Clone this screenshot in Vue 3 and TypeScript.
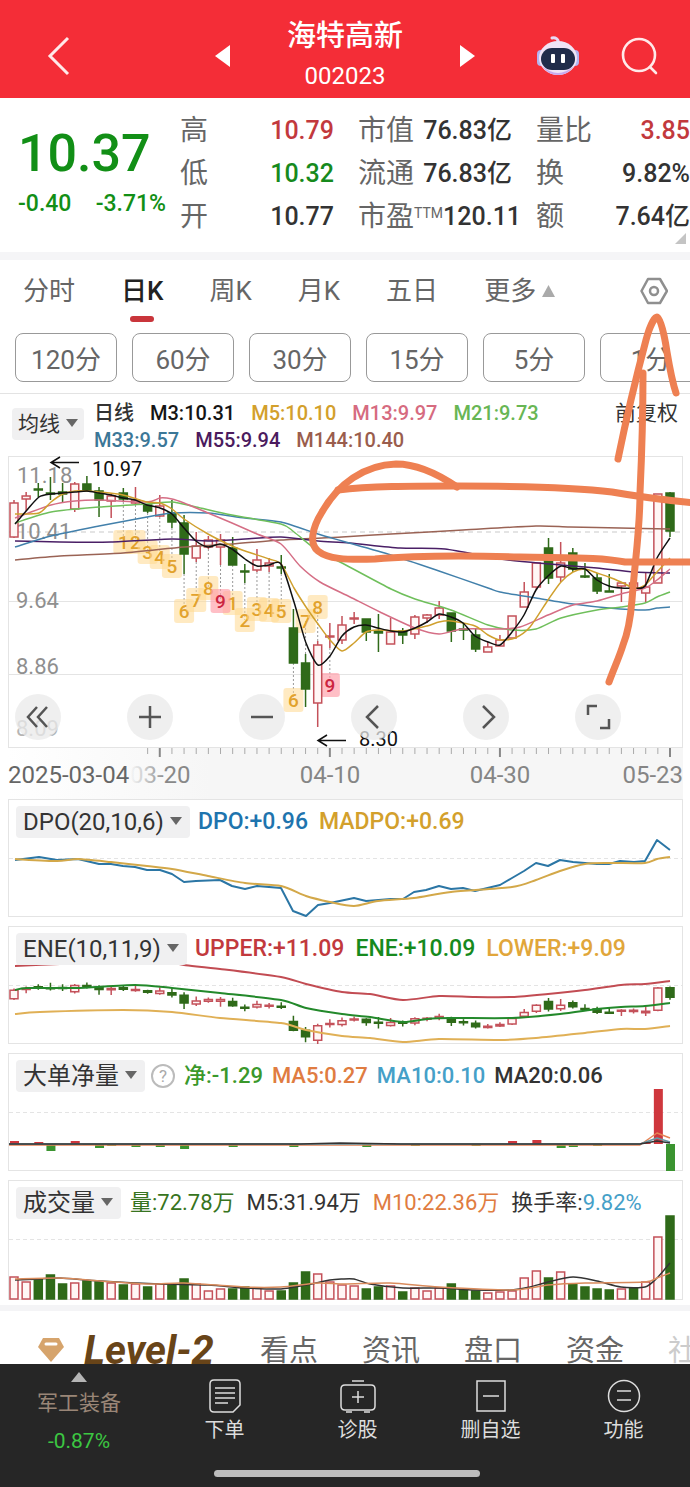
<script setup lang="ts">
import { ref } from 'vue'

type Pt = [number, number]
type Tone = 'up' | 'down'
type Candle = [Tone, number, number, number, number]

const STEP = 656 / 54
const cx = (i: number): number => 14 + i * STEP

// tone, wick top, body top, body bottom, wick bottom
const candles: Candle[] = [
  ['up', 500, 503, 537, 538], ['up', 492, 496, 499, 511], ['down', 483, 489, 490, 497],
  ['down', 477, 493, 494, 500], ['down', 483, 492, 494, 502], ['up', 482, 484, 509, 512],
  ['down', 476, 484, 491, 492], ['down', 487, 491, 500, 517], ['up', 494, 496, 501, 518],
  ['down', 488, 493, 499, 502], ['up', 487, 500, 503, 505], ['down', 505, 505, 511, 513],
  ['up', 495, 506, 516, 517], ['down', 500, 513, 522, 528], ['down', 515, 523, 554, 574],
  ['up', 532, 546, 558, 562], ['up', 536, 540, 547, 549], ['up', 534, 540, 547, 565],
  ['down', 537, 548, 565, 565], ['down', 564, 571, 572, 583], ['up', 549, 560, 570, 572],
  ['up', 558, 563, 566, 572], ['down', 555, 567, 568, 574], ['down', 609, 628, 663, 663],
  ['down', 654, 663, 689, 707], ['up', 641, 645, 703, 727], ['up', 623, 636, 637, 648],
  ['up', 616, 625, 640, 644], ['up', 612, 618, 619, 624], ['down', 619, 619, 632, 641],
  ['down', 614, 631, 633, 652], ['up', 618, 632, 644, 644], ['down', 628, 631, 635, 644],
  ['up', 615, 617, 634, 639], ['up', 614, 615, 618, 623], ['up', 601, 608, 615, 619],
  ['down', 613, 613, 631, 642], ['down', 623, 629, 630, 640], ['down', 628, 635, 649, 652],
  ['up', 642, 647, 652, 652], ['up', 635, 640, 646, 646], ['up', 616, 616, 638, 638],
  ['up', 582, 592, 607, 607], ['up', 563, 563, 587, 590], ['down', 538, 548, 578, 584],
  ['up', 542, 563, 577, 582], ['down', 548, 553, 569, 572], ['down', 563, 576, 577, 578],
  ['down', 573, 578, 591, 594], ['down', 574, 591, 592, 592], ['up', 583, 583, 586, 602],
  ['up', 580, 583, 588, 592], ['up', 572, 587, 593, 602], ['up', 494, 494, 583, 583],
  ['down', 492, 493, 531, 537],
]
const eneY = (y: number): number => 988 + (y - 494) * 0.25

function smooth(raw: number[]): string {
  const p: Pt[] = []
  for (let i = 0; i < raw.length; i += 2) p.push([raw[i], raw[i + 1]])
  let d = `M${p[0][0]} ${p[0][1]}`
  for (let i = 0; i < p.length - 1; i++) {
    const a = p[Math.max(i - 1, 0)], b = p[i], c = p[i + 1], e = p[Math.min(i + 2, p.length - 1)]
    d += `C${b[0] + (c[0] - a[0]) / 8} ${b[1] + (c[1] - a[1]) / 8} ${c[0] - (e[0] - b[0]) / 8} ${c[1] - (e[1] - b[1]) / 8} ${c[0]} ${c[1]}`
  }
  return d
}

const averages = [
  { c: '#9a6355', d: smooth([15, 560, 60, 556, 123, 553, 184, 547, 232, 544, 281, 540, 342, 537, 391, 534, 463, 530, 536, 526, 570, 527, 620, 528, 670, 529]) },
  { c: '#4a1f66', d: smooth([15, 541, 60, 542, 111, 542, 172, 539, 208, 541, 245, 539, 281, 537, 318, 541, 350, 543, 400, 548, 445, 549, 500, 559, 550, 564, 597, 568, 634, 572, 670, 573]) },
  { c: '#4280ab', d: smooth([15, 547, 51, 536, 99, 526, 147, 517, 172, 513, 208, 513, 245, 518, 281, 522, 318, 534, 342, 541, 391, 555, 439, 571, 488, 588, 500, 592, 536, 598, 573, 604, 609, 608, 645, 610, 657, 608, 670, 607]) },
  { c: '#6fbf5b', d: smooth([15, 523, 51, 512, 99, 507, 147, 504, 172, 502, 196, 507, 232, 515, 281, 524, 294, 532, 318, 551, 342, 563, 391, 589, 415, 599, 451, 610, 488, 625, 512, 630, 536, 629, 561, 618, 597, 610, 621, 607, 645, 603, 657, 597, 670, 592]) },
  { c: '#d56e85', d: smooth([15, 518, 51, 505, 75, 501, 99, 500, 147, 502, 160, 498, 172, 499, 184, 503, 208, 513, 232, 523, 257, 534, 281, 544, 300, 566, 320, 582, 350, 597, 380, 612, 415, 628, 439, 634, 463, 629, 500, 629, 520, 627, 548, 615, 573, 605, 597, 601, 621, 594, 645, 588, 657, 580, 670, 569]) },
  { c: '#d0a02e', d: smooth([15, 514, 39, 513, 51, 502, 63, 494, 75, 491, 87, 491, 99, 492, 123, 495, 147, 502, 160, 503, 172, 509, 184, 519, 208, 534, 232, 546, 245, 551, 269, 559, 281, 564, 294, 588, 306, 607, 318, 624, 330, 640, 342, 651, 354, 643, 366, 632, 378, 630, 403, 631, 427, 626, 439, 622, 451, 621, 475, 626, 488, 635, 500, 640, 515, 638, 530, 627, 548, 600, 561, 582, 573, 572, 585, 569, 597, 573, 609, 577, 621, 582, 634, 588, 645, 585, 657, 572, 670, 558]) },
  { c: '#111', d: smooth([15, 524, 27, 510, 39, 497, 51, 494, 63, 493, 75, 492, 87, 491, 99, 493, 111, 495, 123, 498, 135, 500, 147, 505, 160, 508, 172, 514, 184, 528, 196, 541, 208, 547, 220, 544, 232, 549, 245, 559, 257, 566, 269, 565, 281, 564, 294, 602, 306, 643, 318, 665, 330, 656, 342, 636, 354, 627, 366, 625, 378, 628, 391, 631, 403, 632, 415, 628, 427, 622, 439, 614, 451, 617, 463, 623, 475, 636, 488, 642, 500, 645, 512, 632, 524, 615, 536, 590, 548, 576, 561, 566, 573, 569, 585, 569, 597, 580, 609, 586, 621, 588, 634, 588, 645, 586, 657, 558, 670, 538]) },
]

// candle index, digit, badge centre
const badges: [number, number, number][] = [
  [9, 1, 542], [10, 2, 542], [11, 3, 552], [12, 4, 557], [13, 5, 566], [14, 6, 611], [15, 7, 600],
  [16, 8, 588], [18, 1, 603], [19, 2, 620], [20, 3, 609], [21, 4, 610], [22, 5, 611],
  [23, 6, 700], [24, 7, 621], [25, 8, 607], [17, 9, 601], [26, 9, 685],
]

const dpo = 'M15 860L39 857 57 860 78 859 99 864 111 864 123 866 135 867 147 870 160 870 172 874 184 882 196 881 220 880 232 886 245 889 257 886 281 888 293 911 306 916 318 905 330 903 354 898 366 901 391 899 403 899 414 892 426 890 439 886 451 889 463 888 475 891 500 885 512 878 524 871 536 863 548 866 560 860 573 862 597 864 609 864 620 861 634 862 645 861 657 840 670 850'
const madpo = smooth([15, 859, 57, 861, 78, 859, 111, 862, 147, 866, 172, 869, 208, 876, 245, 883, 281, 886, 306, 896, 330, 902, 354, 906, 378, 901, 414, 898, 451, 892, 512, 887, 536, 880, 560, 871, 585, 864, 609, 863, 645, 863, 657, 859, 670, 857])

const bands = [
  { c: '#c24c53', d: smooth([15, 966, 60, 964, 123, 962, 172, 963, 184, 965, 220, 969, 281, 977, 306, 984, 342, 992, 370, 994, 403, 1000, 439, 996, 475, 997, 512, 997, 548, 994, 585, 990, 621, 985, 645, 984, 670, 981]) },
  { c: '#23892b', d: smooth([15, 990, 27, 988, 75, 988, 135, 985, 172, 988, 220, 993, 281, 1000, 306, 1008, 342, 1014, 370, 1017, 403, 1022, 427, 1019, 451, 1018, 512, 1018, 560, 1014, 597, 1009, 621, 1007, 645, 1006, 670, 1003]) },
  { c: '#e0b056', d: smooth([15, 1014, 40, 1012, 123, 1010, 172, 1012, 220, 1018, 281, 1023, 306, 1030, 342, 1036, 370, 1038, 403, 1042, 439, 1039, 500, 1040, 536, 1038, 585, 1033, 621, 1029, 645, 1029, 670, 1026]) },
]

// candle index, bar height above (positive) or below (negative) the base line
const netBars: [number, number][] = [
  [0, 3], [2, 2], [3, -7], [5, 3], [6, -1], [7, -4], [8, -2], [10, -3], [12, -3], [14, -5], [18, -3], [23, -3],
  [28, 1], [29, -3], [31, 1], [33, -2], [38, -2], [41, 3], [43, 4], [45, -4], [46, -3], [48, -2], [52, 2], [53, 55], [54, -27],
]

const volumes: [Tone, number][] = [
  ['up', 22], ['up', 17], ['down', 20], ['down', 24], ['down', 15], ['up', 16], ['down', 18], ['down', 17], ['up', 16],
  ['down', 14], ['up', 15], ['down', 12], ['up', 15], ['down', 14], ['down', 20], ['up', 15], ['up', 8], ['up', 10],
  ['down', 10], ['down', 12], ['up', 11], ['up', 8], ['down', 8], ['down', 16], ['down', 27], ['up', 25], ['up', 17],
  ['up', 14], ['up', 13], ['down', 10], ['down', 12], ['up', 13], ['down', 7], ['up', 11], ['up', 8], ['up', 11],
  ['down', 15], ['down', 9], ['down', 8], ['up', 6], ['up', 7], ['up', 8], ['up', 21], ['up', 28], ['down', 21],
  ['up', 27], ['down', 15], ['down', 12], ['down', 10], ['down', 9], ['up', 10], ['down', 11], ['up', 17], ['up', 62], ['down', 83],
]
const vol5 = smooth([15, 1280, 40, 1279, 60, 1278, 100, 1281, 160, 1284, 208, 1285, 245, 1288, 281, 1289, 306, 1285, 330, 1280, 342, 1279, 354, 1279, 370, 1284, 403, 1288, 439, 1288, 475, 1290, 512, 1290, 530, 1287, 548, 1282, 573, 1277, 597, 1281, 621, 1287, 645, 1287, 657, 1278, 670, 1263])
const vol10 = smooth([15, 1279, 60, 1278, 100, 1281, 150, 1284, 184, 1283, 245, 1287, 281, 1287, 318, 1283, 345, 1284, 390, 1283, 439, 1287, 512, 1290, 548, 1285, 585, 1283, 645, 1282, 657, 1278, 670, 1273])

const quotes = [
  { k: '高', v: '10.79', t: 'red' }, { k: '市值', v: '76.83亿', t: '' }, { k: '量比', v: '3.85', t: 'red' },
  { k: '低', v: '10.32', t: 'green' }, { k: '流通', v: '76.83亿', t: '' }, { k: '换', v: '9.82%', t: '' },
  { k: '开', v: '10.77', t: '' }, { k: '市盈', s: 'TTM', v: '120.11', t: '' }, { k: '额', v: '7.64亿', t: '' },
]
const tabs = ['分时', '日K', '周K', '月K', '五日', '更多']
const tab = ref('日K')
const periods = ['120分', '60分', '30分', '15分', '5分', '1分']
const legend = [
  [['日线', 'ink'], ['M3:10.31', 'black'], ['M5:10.10', 'gold'], ['M13:9.97', 'pink'], ['M21:9.73', 'lime']],
  [['M33:9.57', 'steel'], ['M55:9.94', 'plum'], ['M144:10.40', 'brown']],
]
const panels = [
  { id: 'dpo', name: 'DPO(20,10,6)', top: 799, grid: 858, items: [['DPO:+0.96', 'blue'], ['MADPO:+0.69', 'gold']] },
  { id: 'ene', name: 'ENE(10,11,9)', top: 926, grid: 985, items: [['UPPER:+11.09', 'red'], ['ENE:+10.09', 'green'], ['LOWER:+9.09', 'amber']] },
  { id: 'net', name: '大单净量', top: 1053, grid: 1112, items: [['净:-1.29', 'leaf'], ['MA5:0.27', 'orange'], ['MA10:0.10', 'sky'], ['MA20:0.06', 'ink']] },
  { id: 'vol', name: '成交量', top: 1180, grid: 1239, items: [['量:72.78万', 'forest'], ['M5:31.94万', 'ink'], ['M10:22.36万', 'orange']] },
]
const zooms = [
  { n: '最早', d: 'M22 13L13 23L22 33M32 13L23 23L32 33' },
  { n: '放大', d: 'M12 23H34M23 12V34' },
  { n: '缩小', d: 'M12 23H34' },
  { n: '前移', d: 'M27 12L16 23L27 34' },
  { n: '后移', d: 'M20 12L31 23L20 34' },
  { n: '全屏', d: 'M13 21V12H22M34 25V34H25' },
]
const ticks = Array.from({ length: 44 }, (_, k) => k + 11)
</script>

<template>
  <main class="screen">
    <header class="top">
      <button class="bare back" aria-label="返回">
        <svg width="24" height="40" viewBox="0 0 24 40"><path d="M21 2L3 20L21 38" /></svg>
      </button>
      <div class="stock">
        <button class="bare" aria-label="上一只"><svg width="15" height="22" viewBox="0 0 15 22"><path d="M15 0V22L0 11Z" fill="#fff" /></svg></button>
        <h1>海特高新<small>002023</small></h1>
        <button class="bare" aria-label="下一只"><svg width="15" height="22" viewBox="0 0 15 22"><path d="M0 0V22L15 11Z" fill="#fff" /></svg></button>
      </div>
      <div class="tools">
        <button class="bare" aria-label="智能助手">
          <svg width="42" height="42" viewBox="0 0 42 42">
            <path d="M21 8C22 4 18 2 15 3" fill="none" stroke="#e8d8f4" stroke-width="3" stroke-linecap="round" />
            <rect x="0" y="15" width="8" height="16" rx="4" fill="#b3b4f0" />
            <rect x="34" y="15" width="8" height="16" rx="4" fill="#b3b4f0" />
            <ellipse cx="21" cy="23" rx="19" ry="17" fill="#f0e4f6" />
            <path d="M5 31Q21 45 37 31Q31 40 21 40T5 31Z" fill="#c9a9ee" />
            <rect x="4" y="13" width="34" height="22" rx="11" fill="#202c4a" />
            <rect x="14" y="19" width="4" height="9" rx="1" fill="#fff" />
            <rect x="24" y="19" width="4" height="9" rx="1" fill="#fff" />
          </svg>
        </button>
        <button class="bare" aria-label="搜索">
          <svg width="38" height="38" viewBox="0 0 38 38" fill="none" stroke="#ffe9e9" stroke-width="2.6"><circle cx="18" cy="18" r="16" /><path d="M29 30L35 36" stroke-linecap="round" /></svg>
        </button>
      </div>
    </header>

    <section class="quote">
      <div class="price">
        <strong>10.37</strong>
        <p><span>-0.40</span><span>-3.71%</span></p>
      </div>
      <dl>
        <div v-for="q in quotes" :key="q.k">
          <dt>{{ q.k }}<sup v-if="q.s">{{ q.s }}</sup></dt>
          <dd :class="q.t">{{ q.v }}</dd>
        </div>
      </dl>
      <svg class="corner" width="11" height="11" viewBox="0 0 11 11"><path d="M11 0V11H0Z" fill="#c4c4c4" /></svg>
    </section>

    <nav class="tabs">
      <button v-for="t in tabs" :key="t" class="bare" :class="{ on: tab === t }" @click="tab = t">
        {{ t }}<svg v-if="t === '更多'" width="13" height="12" viewBox="0 0 13 12"><path d="M6.500 0L13 12H0Z" fill="#aaa" /></svg>
      </button>
      <button class="bare gear" aria-label="设置">
        <svg width="28" height="28" viewBox="0 0 28 28" fill="none" stroke="#8f8f8f" stroke-width="2.500" stroke-linejoin="round"><path d="M8 2H20L27 14L20 26H8L1.500 14Z" /><circle cx="14" cy="14" r="4" /></svg>
      </button>
    </nav>
    <div class="periods"><button v-for="p in periods" :key="p">{{ p }}</button></div>

    <div class="ma">
      <label class="pick small">
        <select aria-label="均线"><option>均线</option></select>
        <svg width="12" height="8" viewBox="0 0 12 8"><path d="M0 0H12L6 8Z" /></svg>
      </label>
      <div class="lines">
        <p v-for="(row, r) in legend" :key="r"><span v-for="l in row" :key="l[0]" :class="l[1]">{{ l[0] }}</span></p>
      </div>
      <button class="bare adjust">前复权</button>
    </div>

    <section class="stack">
      <svg class="plot" viewBox="8 456 675 292">
        <g class="grid">
          <rect x="8.500" y="456.500" width="674" height="291" />
          <path d="M9 532H682" stroke-dasharray="5 4" class="strong" />
          <path d="M9 601.500H682M9 674.500H682" />
        </g>
        <g class="scale">
          <text x="17" y="483">11.18</text><text x="16" y="539">10.41</text><text x="16" y="608">9.64</text>
          <text x="16" y="674">8.86</text><text x="16" y="736" class="faint">8.09</text>
        </g>
        <path v-for="b in badges" :key="'l' + b[0]" class="leader" :d="`M${cx(b[0])} ${b[0] === 24 || b[0] === 25 ? candles[b[0]][1] : candles[b[0]][4]}V${b[2]}`" />
        <g v-for="b in badges" :key="b[0]" :class="b[1] === 9 ? 'nine' : 'badge'">
          <rect :x="cx(b[0]) - 10" :y="b[2] - 12" width="20" height="24" rx="3" />
          <text :x="cx(b[0])" :y="b[2] + 7">{{ b[1] }}</text>
        </g>
        <g v-for="(k, i) in candles" :key="i" :class="k[0]">
          <path :d="`M${cx(i)} ${k[1]}V${k[2]}M${cx(i)} ${k[3]}V${k[4]}`" />
          <rect :x="cx(i) - 4" :y="k[2]" width="8" :height="k[3] - k[2]" />
        </g>
        <path v-for="a in averages" :key="a.c" :d="a.d" :stroke="a.c" class="curve" />
        <path class="pointer" d="M79 462.500H51M60 457L51 462.500L60 468M346 740.500H318M327 735L318 740.500L327 746" />
        <text x="92" y="476" class="mark">10.97</text>
        <text x="359" y="746" class="mark">8.30</text>
      </svg>
      <div class="zooms">
        <button v-for="z in zooms" :key="z.n" :aria-label="z.n"><svg width="46" height="46" viewBox="0 0 46 46"><path :d="z.d" /></svg></button>
      </div>
    </section>

    <svg class="axis" viewBox="8 748 675 51">
      <defs>
        <linearGradient id="hide" x1="0" x2="1"><stop offset="0" stop-color="#888" stop-opacity="0" /><stop offset="0.600" stop-color="#888" /></linearGradient>
        <linearGradient id="shade" x1="0" x2="1"><stop offset="0" stop-color="#fff" /><stop offset="0.300" stop-color="#f6f6f6" /></linearGradient>
      </defs>
      <rect x="8" y="748" width="675" height="51" fill="url(#shade)" />
      <path v-for="i in ticks" :key="i" :d="`M${cx(i)} 748V${(i - 12) % 14 === 0 ? 757 : 754}`" :class="{ major: (i - 12) % 14 === 0 }" />
      <text x="8" y="783" class="start">2025-03-04</text>
      <text x="130" y="783" fill="url(#hide)">03-20</text>
      <text x="330" y="783" text-anchor="middle">04-10</text>
      <text x="500" y="783" text-anchor="middle">04-30</text>
      <text x="683" y="783" text-anchor="end">05-23</text>
    </svg>

    <section v-for="p in panels" :key="p.id" class="stack panel">
      <svg class="plot" :viewBox="`8 ${p.top} 675 ${p.id === 'vol' ? 120 : 118}`">
        <g class="grid">
          <rect x="8.500" :y="p.top + 0.5" width="674" :height="p.id === 'vol' ? 119 : 117" />
          <path :d="`M9 ${p.grid + 0.5}H682`" stroke-dasharray="4 3" />
        </g>
        <g v-if="p.id === 'dpo'">
          <path :d="dpo" stroke="#2b76a5" class="curve thick" />
          <path :d="madpo" stroke="#d3a849" class="curve thick" />
        </g>
        <g v-if="p.id === 'ene'">
          <g v-for="(k, i) in candles" :key="i" :class="k[0]">
            <path :d="`M${cx(i)} ${eneY(k[1]) - 1}V${eneY(k[2])}M${cx(i)} ${eneY(k[3])}V${eneY(k[4]) + 1}`" />
            <rect :x="cx(i) - 4" :y="eneY(k[2])" width="8" :height="Math.max(1, eneY(k[3]) - eneY(k[2]))" />
          </g>
          <path v-for="b in bands" :key="b.c" :d="b.d" :stroke="b.c" class="curve thick" />
        </g>
        <g v-if="p.id === 'net'">
          <rect v-for="n in netBars" :key="n[0]" :x="cx(n[0]) - 4" :y="n[1] > 0 ? 1144 - n[1] : 1144" width="9" :height="Math.abs(n[1])" :fill="n[1] > 0 ? '#cf373d' : '#3b9430'" />
          <path d="M9 1145H640L657 1133L670 1138" stroke="#e58355" class="curve" />
          <path d="M9 1144H640L657 1138L670 1142" stroke="#6697a5" class="curve" />
          <path d="M9 1144H300L340 1143L400 1144L640 1144L657 1141L670 1143" stroke="#333" class="curve" />
        </g>
        <g v-if="p.id === 'vol'">
          <g v-for="(v, i) in volumes" :key="i" :class="v[0]">
            <rect :x="cx(i) - 4" :y="1299 - v[1]" width="8" :height="v[1]" />
          </g>
          <path :d="vol5" stroke="#333" class="curve" />
          <path :d="vol10" stroke="#d98b5c" class="curve" />
        </g>
      </svg>
      <div class="info" :class="p.id">
        <label class="pick">
          <select :aria-label="p.name"><option>{{ p.name }}</option></select>
          <svg width="12" height="8" viewBox="0 0 12 8"><path d="M0 0H12L6 8Z" /></svg>
        </label>
        <button v-if="p.id === 'net'" class="help" aria-label="说明">?</button>
        <span v-for="s in p.items" :key="s[0]" :class="s[1]">{{ s[0] }}</span>
        <span v-if="p.id === 'vol'" class="ink">换手率:<b class="sky">9.82%</b></span>
      </div>
    </section>

    <nav class="more">
      <svg width="26" height="24" viewBox="0 0 26 24"><path d="M5 0H21L26 9L13 24L0 9Z" fill="#d6a46c" /><path d="M8 6H18" stroke="#fff" stroke-width="3" stroke-linecap="round" /></svg>
      <a href="#level2" class="level">Level-2</a>
      <a href="#view">看点</a><a href="#news">资讯</a><a href="#book">盘口</a><a href="#fund">资金</a><a href="#club" class="dim">社</a>
    </nav>

    <footer>
      <div class="dock">
        <button class="bare sector">
          <svg width="16" height="10" viewBox="0 0 16 10"><path d="M8 0L16 10H0Z" fill="#b5b5b5" /></svg>
          <span>军工装备</span><b>-0.87%</b>
        </button>
        <button class="bare">
          <svg width="36" height="36" viewBox="0 0 36 36"><path d="M7 2H29Q33 2 33 6V27L26 34H7Q3 34 3 30V6Q3 2 7 2ZM8 10H28M8 15H28M8 20H28M8 25H21" /></svg>下单
        </button>
        <button class="bare">
          <svg width="36" height="36" viewBox="0 0 36 36"><path d="M5 7H31Q35 7 35 11V28Q35 32 31 32H5Q1 32 1 28V11Q1 7 5 7ZM12 3H24M18 13V25M12 19H24M6 34H12M24 34H30" /></svg>诊股
        </button>
        <button class="bare">
          <svg width="36" height="36" viewBox="0 0 36 36"><path d="M4 3H32V33H4ZM10 18H26" /></svg>删自选
        </button>
        <button class="bare">
          <svg width="36" height="36" viewBox="0 0 36 36"><circle cx="18" cy="18" r="15.500" /><path d="M11 13H25M11 22H25" /></svg>功能
        </button>
      </div>
      <div class="home"></div>
    </footer>

    <svg class="ink-layer" viewBox="0 0 690 1487" aria-hidden="true">
      <path d="M457 487C438 474 416 464 396 464C364 465 338 484 322 512C312 528 309 544 318 551C328 559 345 560 375 559C410 556 450 555 520 557C570 558 600 557 625 562C650 562 670 562 694 562" />
      <path d="M338 490C370 486 410 486 457 486C520 486 580 488 612 492C640 497 665 500 694 503" />
      <path d="M618 459C628 410 638 370 646 340C650 325 655 317 657 317C660 317 664 332 667 352C670 370 673 384 676 393" />
      <path d="M643 373C643 420 642 450 640 493C640 530 635 560 632 600C630 625 627 635 623 645C619 658 614 668 609 682" />
    </svg>
  </main>
</template>

<style>
body { margin: 0; background: #fff; }
</style>

<style scoped>
.screen { position: relative; overflow: hidden; font-family: Roboto, "Noto Sans CJK SC", sans-serif; color: #333; }
.screen * { box-sizing: border-box; }
button, select { font-family: inherit; }
.bare { border: 0; background: none; padding: 0; color: inherit; font-size: inherit; line-height: inherit; white-space: nowrap; }
svg { display: block; }
p, h1, dl, dd { margin: 0; }

.top { display: grid; grid-template-columns: 1fr 260px 1fr; align-items: center; height: 98px; padding-top: 14px; background: #f42d37; color: #fff; }
.back { justify-self: start; margin-left: 47px; }
.back path { fill: none; stroke: #ffe9e9; stroke-width: 3; }
.stock { display: flex; justify-content: space-between; align-items: center; }
h1 { font-size: 29px; line-height: 40px; font-weight: 500; text-align: center; }
h1 small { display: block; font-size: 24px; line-height: 40px; font-weight: 400; }
.tools { display: flex; justify-content: flex-end; align-items: center; gap: 42px; padding-right: 31px; }

.quote { position: relative; display: grid; grid-template-columns: 180px 1fr; padding: 11px 0 14px; border-bottom: 8px solid #f5f5f7; }
.price { padding: 17px 14px 0 18px; color: #128f16; text-align: center; }
.price strong { display: block; font-size: 52px; line-height: 56px; font-weight: 500; margin-right: 16px; }
.price p { display: flex; justify-content: space-between; font-size: 23px; font-weight: 500; line-height: 44px; }
dl { display: grid; grid-template-columns: repeat(3, minmax(0, 1fr)); column-gap: 24px; }
dl div { display: flex; justify-content: space-between; font-size: 28px; line-height: 43px; white-space: nowrap; }
dt { color: #666; }
dt sup { font-size: 14px; line-height: 14px; vertical-align: 8px; }
dd { font-size: 25px; font-weight: 500; }
.corner { position: absolute; right: 4px; bottom: 8px; }

.tabs { display: flex; align-items: flex-start; gap: 46px; height: 65px; padding: 0 22px 0 23px; font-size: 26px; line-height: 62px; color: #666; }
.tabs button { display: flex; align-items: center; gap: 6px; height: 62px; }
.tabs .on { position: relative; color: #222; font-weight: 500; }
.tabs .on::after { content: ""; position: absolute; left: calc(50% - 12px); bottom: 0; width: 24px; height: 6px; border-radius: 3px; background: #c9353b; }
.tabs .gear { margin-left: auto; }
.periods { display: flex; gap: 15px; padding: 8px 0 11px 15px; overflow: hidden; border-bottom: 1px solid #e3e3e3; }
.periods button { flex: 0 0 102px; height: 49px; padding: 0; border: 1px solid #999; border-radius: 8px; background: #fff; font-size: 26px; color: #666; }

.ma { display: flex; align-items: flex-start; height: 62px; padding: 6px 12px 0; font-size: 21px; line-height: 27px; }
.lines { flex: 1; margin-left: 10px; font-size: 20px; font-weight: 500; }
.lines p { display: flex; gap: 16px; white-space: nowrap; }
.adjust { font-size: 21px; }
.pick { position: relative; display: block; flex: none; height: 32px; border-radius: 4px; background: #f0f0f1; }
.pick select { appearance: none; display: block; height: 32px; padding: 0 26px 0 7px; border: 0; background: none; font-size: 24px; color: #333; }
.pick svg { position: absolute; right: 8px; top: 11px; fill: #666; pointer-events: none; }
.pick.small { margin-top: 8px; }
.pick.small select { font-size: 21px; padding: 0 24px 0 6px; }
.pick.small svg { right: 6px; }

.stack { display: grid; grid-template-columns: minmax(0, 1fr); margin: 0 7px 0 8px; }
.stack > * { grid-area: 1 / 1; }
.plot { width: 100%; height: auto; }
.panel { margin-bottom: 9px; }
.panel:last-of-type { margin-bottom: 5px; }
.grid rect, .grid path { fill: none; stroke: #e4e4e4; }
.grid .strong { stroke: #c9c9c9; }
.scale text { font-size: 22px; fill: #8f8f8f; }
.scale .faint { fill: #b5b5b5; }
.curve { fill: none; stroke-width: 1.500; stroke-linejoin: round; }
.thick { stroke-width: 2; }
.up path, .up rect { stroke: #c4515a; stroke-width: 1.500; fill: none; }
.up rect { fill: #fff6f5; }
.down path, .down rect { stroke: #2f6a19; stroke-width: 1.500; fill: #2f6a19; }
.leader { stroke: #999; stroke-dasharray: 2 2; }
.badge rect { fill: #ffd98f; fill-opacity: .55; }
.nine rect { fill: #ff9ca8; fill-opacity: .65; }
.badge text, .nine text { font-size: 19px; text-anchor: middle; fill: #e2a22c; font-weight: 500; }
.nine text { fill: #cc2540; }
.pointer { fill: none; stroke: #111; stroke-width: 1.500; }
.mark { font-size: 20px; fill: #111; }
.zooms { align-self: end; display: flex; justify-content: space-between; padding: 0 62px 8px 7px; }
.zooms button { width: 46px; height: 46px; padding: 0; border: 0; border-radius: 50%; background: rgb(233 233 233 / 75%); }
.zooms path { fill: none; stroke: #555; stroke-width: 2.500; }
.axis { width: calc(100% - 15px); margin: 0 7px 0 8px; }
.axis path { stroke: #aaa; }
.axis .major { stroke: #888; stroke-width: 2; }
.axis text { font-size: 24px; fill: #858585; }
.axis text[fill] { fill: url(#hide); }
.axis .start { fill: #666; }

.info { align-self: start; display: flex; align-items: center; gap: 11px; padding: 7px 8px 0; font-size: 24px; line-height: 32px; white-space: nowrap; }
.info .pick { margin-right: -3px; }
.info.dpo, .info.ene, .info.net { font-weight: 500; }
.info.dpo { font-size: 23px; }
.info.ene { font-size: 23px; }
.info.net { gap: 9px; font-size: 22px; }
.info.vol { gap: 12px; font-size: 22px; }
.info b { font-weight: inherit; }
.help { width: 24px; height: 24px; padding: 0; border: 2px solid #bbb; border-radius: 50%; background: none; font-size: 17px; line-height: 20px; color: #aaa; }

.ink { color: #333; }
.black { color: #151515; }
.gold { color: #d3a02c; }
.pink { color: #d66b80; }
.lime { color: #68b654; }
.steel { color: #3c7797; }
.plum { color: #4b1b5e; }
.brown { color: #9a5d4d; }
.blue { color: #1e74ae; }
.red { color: #c2393d; }
.green { color: #168a1d; }
.amber { color: #e1a63a; }
.leaf { color: #3a982b; }
.orange { color: #e07c41; }
.sky { color: #45a0c8; }
.forest { color: #377420; }

.more { display: flex; align-items: center; height: 59px; padding: 27px 0 0 38px; border-top: 6px solid #f4f4f6; overflow: hidden; font-size: 29px; line-height: 40px; white-space: nowrap; }
.more svg { flex: none; align-self: flex-start; }
.more a { flex: none; width: 102px; color: #666; text-decoration: none; }
.more .level { width: 176px; margin-left: 20px; font-size: 40px; font-weight: 700; font-style: italic; color: #684418; }
.more .dim { color: #ccc; }

footer { position: relative; height: 123px; background: #262626; color: #ddd; }
.dock { display: grid; grid-template-columns: 158px repeat(4, 1fr); }
.dock button { display: flex; flex-direction: column; align-items: center; gap: 2px; padding-top: 14px; font-size: 20px; line-height: 28px; }
.dock button svg { fill: none; stroke: #ddd; stroke-width: 1.500; }
.dock .sector { gap: 0; padding-top: 8px; font-size: 21px; color: #9a8677; }
.dock .sector svg { stroke: none; }
.sector span { line-height: 42px; }
.sector b { line-height: 34px; font-weight: 400; color: #3cc742; }
.home { position: absolute; left: 31%; right: 30.500%; bottom: 10px; height: 7px; border-radius: 4px; background: #bdbdbd; }
.ink-layer { position: absolute; inset: 0 0 auto; width: 100%; pointer-events: none; }
.ink-layer path { fill: none; stroke: #ee8052; stroke-width: 7; stroke-linecap: round; stroke-linejoin: round; }
</style>
